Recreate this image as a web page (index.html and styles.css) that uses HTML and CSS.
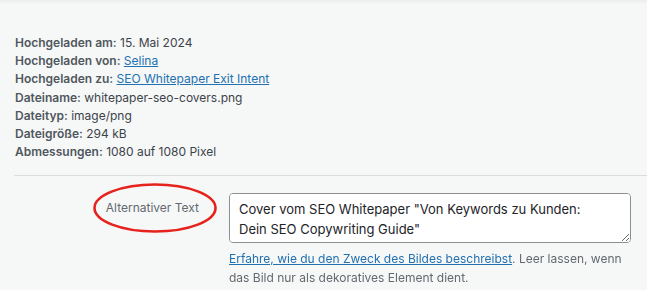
FILE: index.html
```html
<!DOCTYPE html>
<html lang="de">
<head>
    <meta charset="UTF-8">
    <title>Anhang-Details</title>
    <link rel="stylesheet" href="styles.css">
</head>
<body>
    <div class="top-shadow"></div>
    <div class="attachment-info">
        <div class="details">
            <div><strong>Hochgeladen am:</strong> 15. Mai 2024</div>
            <div><strong>Hochgeladen von:</strong> <a href="#">Selina</a></div>
            <div><strong>Hochgeladen zu:</strong> <a href="#">SEO Whitepaper Exit Intent</a></div>
            <div><strong>Dateiname:</strong> whitepaper-seo-covers.png</div>
            <div><strong>Dateityp:</strong> image/png</div>
            <div><strong>Dateigröße:</strong> 294 kB</div>
            <div><strong>Abmessungen:</strong> 1080 auf 1080 Pixel</div>
        </div>
        <hr class="divider">
        <div class="setting">
            <label for="alt-text" class="name">Alternativer Text</label>
            <svg class="circle" width="126" height="52" viewBox="0 0 126 52">
                <ellipse cx="63" cy="26" rx="60.5" ry="23.5" fill="none" stroke="#e5231c" stroke-width="2.6"/>
            </svg>
            <div class="field">
                <textarea id="alt-text">Cover vom SEO Whitepaper "Von Keywords zu Kunden: Dein SEO Copywriting Guide"</textarea>
                <p class="description"><a href="#">Erfahre, wie du den Zweck des Bildes beschreibst</a>. Leer lassen, wenn das Bild nur als dekoratives Element dient.</p>
            </div>
        </div>
    </div>
</body>
</html>
```

FILE: styles.css
```css
body {
    margin: 0;
    background: #f6f7f7;
    font-family: Inter, "Liberation Sans", sans-serif;
    color: #3c434a;
}
.top-shadow {
    height: 4px;
    background: linear-gradient(#ebecec, #f6f7f7);
}
.attachment-info {
    padding: 30px 0 0 15px;
}
.details {
    font-size: 12px;
    line-height: 18.2px;
}
.details strong {
    font-weight: 600;
    color: #50575e;
}
a {
    color: #2271b1;
}
.divider {
    border: 0;
    border-top: 1px solid #dcdcde;
    margin: 14px 0 0 -1px;
}
.setting {
    position: relative;
    display: grid;
    grid-template-columns: 184px 402px;
    column-gap: 30px;
    margin-top: 17px;
}
.name {
    text-align: right;
    font-size: 12px;
    color: #646970;
    padding-top: 7px;
}
/* red annotation ring over the label */
.circle {
    position: absolute;
    left: 77px;
    top: -11px;
}
.field {
    grid-column: 2;
    grid-row: 1;
}
.field textarea {
    display: block;
    box-sizing: border-box;
    width: 402px;
    height: 50px;
    margin: 0;
    padding: 5px 30px 5px 9px;
    font-family: inherit;
    font-size: 13px;
    line-height: 20px;
    color: #1d2327;
    background: #fff;
    border: 1px solid #8c8f94;
    border-radius: 4px;
}
.description {
    margin: 7px 0 0;
    font-size: 12px;
    line-height: 18.5px;
    color: #646970;
}
```
